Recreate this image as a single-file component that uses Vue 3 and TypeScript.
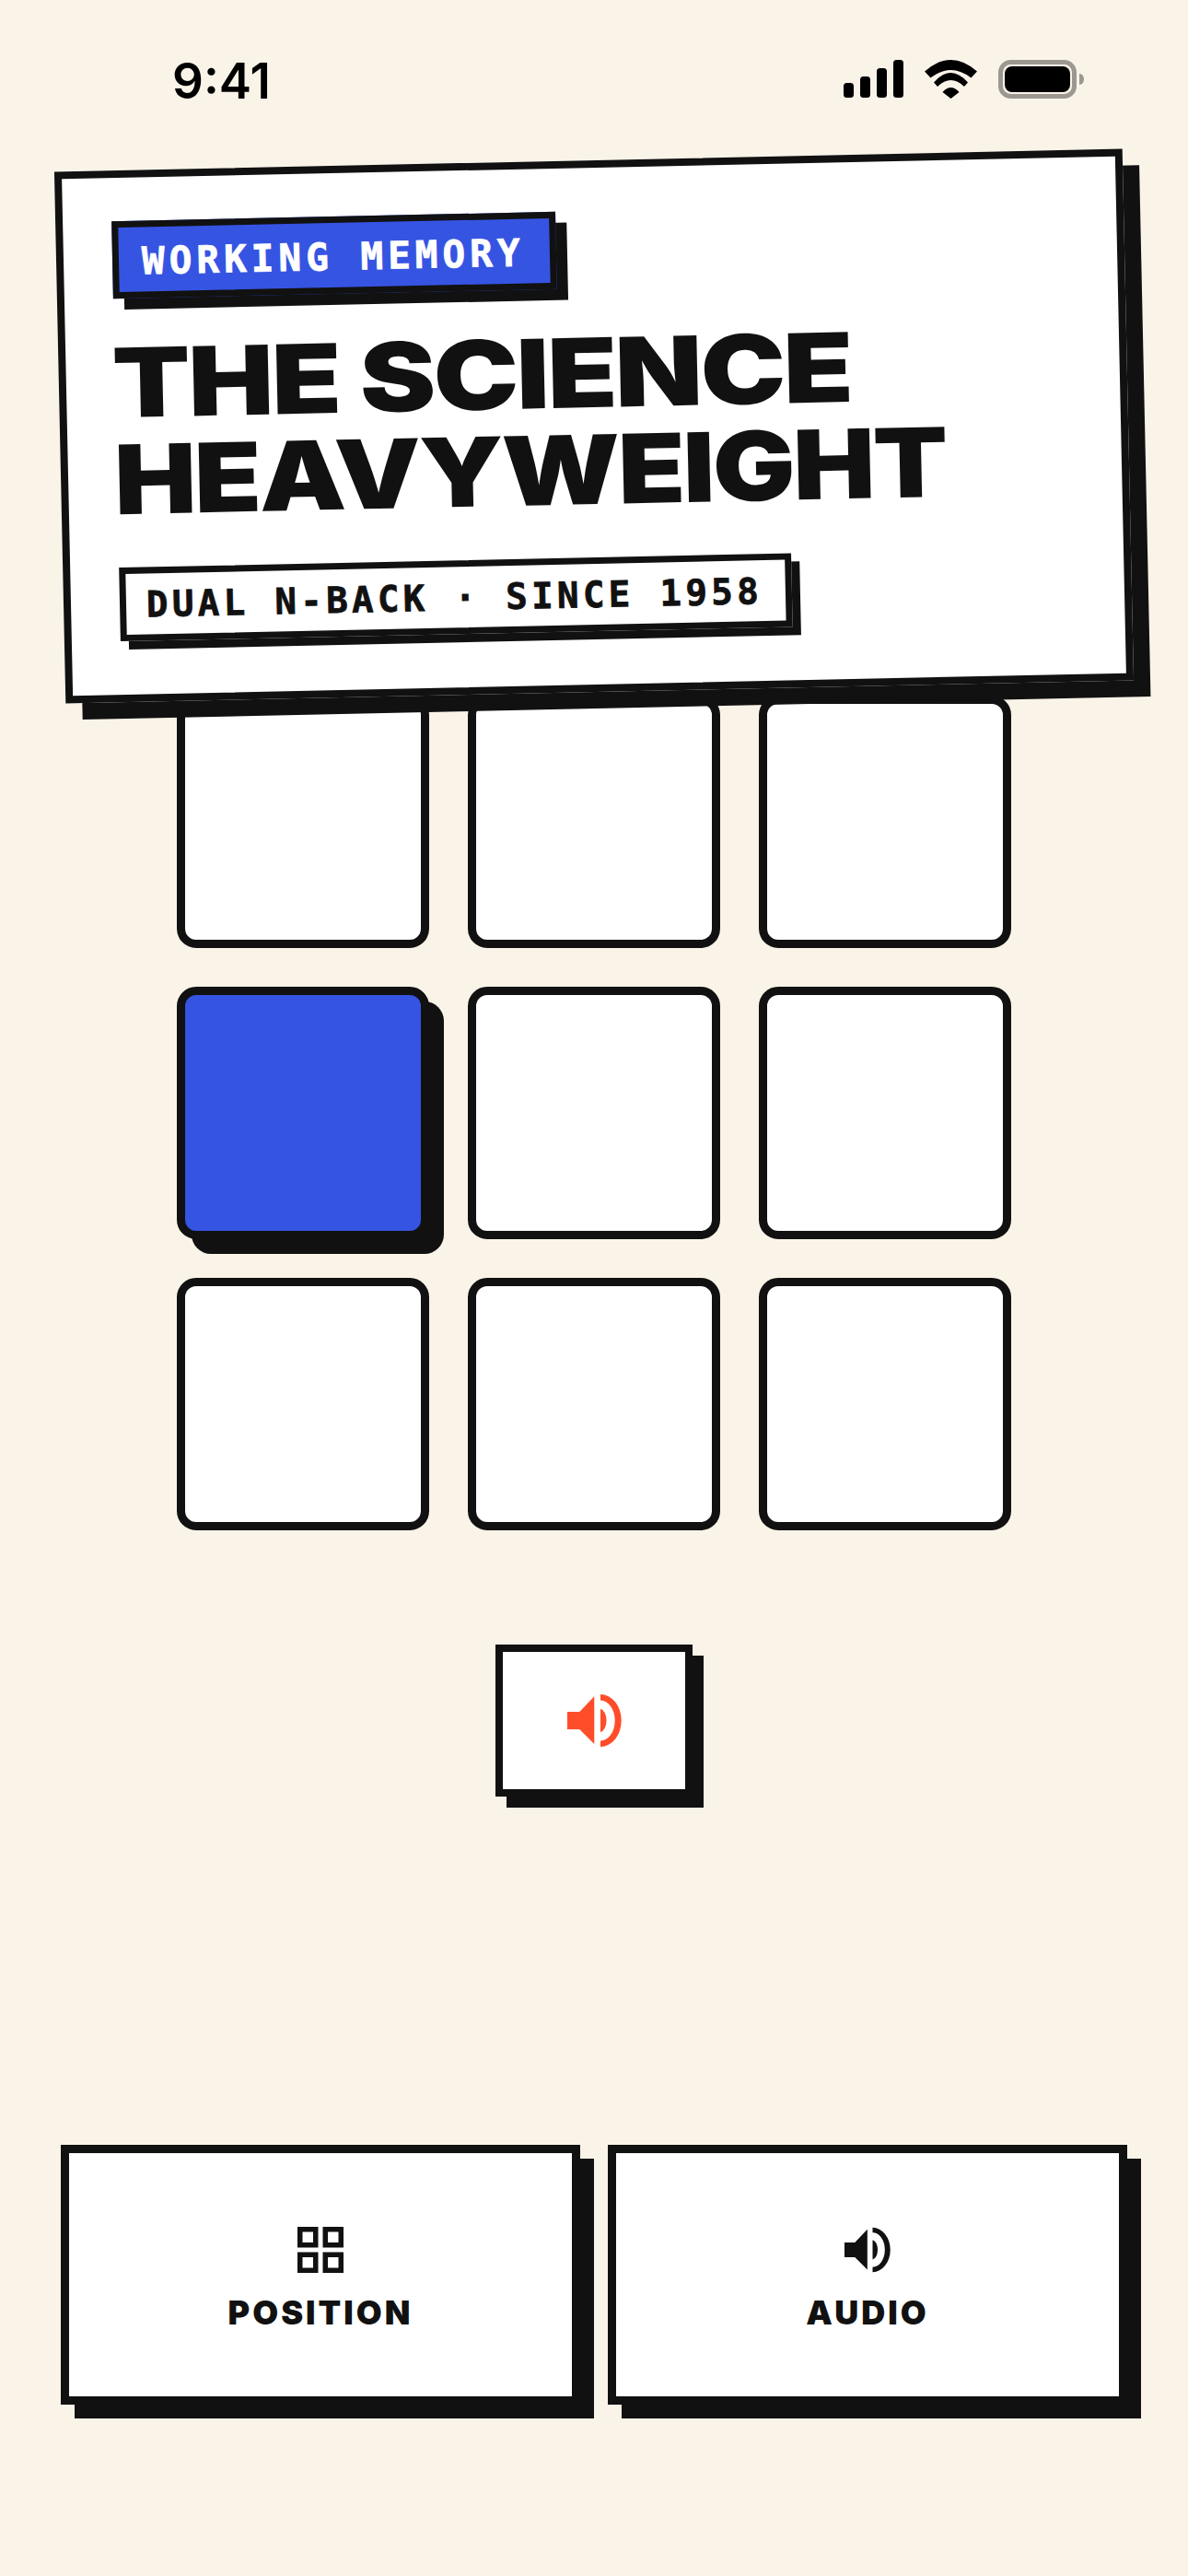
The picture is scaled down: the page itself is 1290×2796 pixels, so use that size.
<template>
  <main class="page">
    <header class="status">
      <span class="time">9:41</span>
      <div class="status-icons">
        <svg width="65" height="41" viewBox="0 0 65 41">
          <rect v-for="bar in signalBars" :key="bar.x" :x="bar.x" :y="41 - bar.h" width="11" :height="bar.h" rx="3.5" />
        </svg>
        <svg width="57" height="42" viewBox="0 0 57 42">
          <path d="M0 12.5Q28.5 -12.5 57 12.5L50.5 19.5Q28.5 2.5 6.5 19.5Z" />
          <path d="M10 24.5Q28.5 3.5 47 24.5L43 29Q28.5 15 14 29Z" />
          <path d="M19.5 35Q28.5 25 37.5 35L28.5 42Z" />
        </svg>
        <svg width="93" height="42" viewBox="0 0 93 42">
          <rect x="2.5" y="2.5" width="80" height="37" rx="11" fill="none" stroke="#9c9891" stroke-width="5" />
          <rect x="7" y="7" width="71" height="28" rx="8" />
          <path d="M88 15c3 0 5 3 5 6s-2 6-5 6Z" fill="#9c9891" />
        </svg>
      </div>
    </header>

    <section class="card">
      <span class="tag">WORKING MEMORY</span>
      <h1 class="title">
        <span class="line-one">THE SCIENCE</span>
        <span class="line-two">HEAVYWEIGHT</span>
      </h1>
      <span class="sub">DUAL N-BACK · SINCE 1958</span>
    </section>

    <div class="grid">
      <div v-for="n in 9" :key="n" class="cell" :class="{ active: n === activeCell }"></div>
    </div>

    <button class="sound" aria-label="Play sound">
      <svg width="59" height="57" viewBox="0 0 59 57">
        <path :d="speakerPath" fill="#ff4d2a" />
      </svg>
    </button>

    <div class="answers">
      <button class="answer">
        <svg width="50" height="50" viewBox="0 0 50 50" fill="none" stroke="#111" stroke-width="5.5">
          <rect x="2.75" y="2.75" width="17" height="17" />
          <rect x="30.25" y="2.75" width="17" height="17" />
          <rect x="2.75" y="30.25" width="17" height="17" />
          <rect x="30.25" y="30.25" width="17" height="17" />
        </svg>
        <span>POSITION</span>
      </button>
      <button class="answer">
        <svg width="50" height="50" viewBox="0 0 59 57">
          <path :d="speakerPath" fill="#111" />
        </svg>
        <span>AUDIO</span>
      </button>
    </div>
  </main>
</template>

<script setup lang="ts">
const activeCell = 4

const signalBars = [
  { x: 0, h: 16 },
  { x: 18, h: 23 },
  { x: 36, h: 32 },
  { x: 54, h: 41 },
]

const speakerPath =
  'M0 19H13.3L29.3 2.3V54L13.3 38H0Z' +
  'M36 0A22.7 28.5 0 0 1 36 57V50.5A15.7 22 0 0 0 36 6.5Z' +
  'M36 15.7A7.7 12.8 0 0 1 36 41Z'
</script>

<style>
body {
  background: #faf3e8;
}
</style>

<style scoped>
.page {
  width: 1290px;
  height: 2796px;
  overflow: hidden;
  background: #faf3e8;
  color: #111;
  font-family: Inter, "Liberation Sans", sans-serif;
}

.status {
  box-sizing: border-box;
  height: 173.5px;
  padding: 62px 113px 0 187px;
  display: flex;
  justify-content: space-between;
  align-items: flex-start;
}

.time {
  font-size: 53px;
  line-height: 53px;
  font-weight: 600;
  color: #000;
}

.status-icons {
  display: flex;
  gap: 23px;
  margin-top: 3px;
}

.card {
  box-sizing: border-box;
  position: relative;
  z-index: 2;
  height: 577px;
  margin: 0 65px;
  padding: 47px 53px;
  background: #fff;
  border: 8px solid #111;
  box-shadow: 18px 18px 0 #111;
  transform: rotate(-1.23deg);
  display: flex;
  flex-direction: column;
  align-items: flex-start;
}

.tag,
.sub {
  box-sizing: border-box;
  font-family: "DejaVu Sans Mono", "Liberation Mono", monospace;
  font-weight: 700;
  white-space: nowrap;
  display: flex;
  align-items: center;
  border: 7px solid #111;
  -webkit-text-stroke: 0.8px currentColor;
}

.tag {
  width: 482px;
  height: 84px;
  padding: 3px 0 0 25px;
  background: #3654e2;
  color: #fff;
  font-size: 41px;
  letter-spacing: 5px;
  box-shadow: 12px 12px 0 #111;
}

.title {
  margin: 39px 0 44px;
  font-size: 104px;
  line-height: 104.6px;
  font-weight: 900;
  letter-spacing: -2px;
  white-space: nowrap;
}

.title span {
  display: block;
  transform-origin: left center;
}

.line-one {
  transform: translateX(-3px) scaleX(1.19);
}

.line-two {
  transform: translateX(-3px) scaleX(1.142);
}

.sub {
  width: 730px;
  height: 80px;
  padding-left: 22px;
  background: #fff;
  font-size: 39px;
  letter-spacing: 4.4px;
  box-shadow: 9px 9px 0 #111;
}

.grid {
  width: 906px;
  margin: 4.5px auto 0;
  display: grid;
  grid-template-columns: repeat(3, 274px);
  grid-auto-rows: 274px;
  gap: 42px;
}

.cell {
  box-sizing: border-box;
  background: #fff;
  border: 9px solid #111;
  border-radius: 21px;
}

.cell.active {
  background: #3654e2;
  box-shadow: 16px 16px 0 #111;
}

.sound {
  display: flex;
  align-items: center;
  justify-content: center;
  box-sizing: border-box;
  width: 214px;
  height: 165px;
  margin: 124px auto 0;
  padding: 0;
  background: #fff;
  border: 8px solid #111;
  box-shadow: 12px 12px 0 #111;
}

.answers {
  margin-top: 378px;
  padding: 0 66px;
  display: grid;
  grid-template-columns: 1fr 1fr;
  gap: 30px;
}

.answer {
  box-sizing: border-box;
  height: 282px;
  padding: 80px 0 0;
  display: flex;
  flex-direction: column;
  align-items: center;
  gap: 25px;
  background: #fff;
  border: 9px solid #111;
  box-shadow: 15px 15px 0 #111;
  color: #111;
  font-family: Inter, "Liberation Sans", sans-serif;
  font-size: 36px;
  line-height: 36px;
  font-weight: 900;
  letter-spacing: 3px;
}
</style>
